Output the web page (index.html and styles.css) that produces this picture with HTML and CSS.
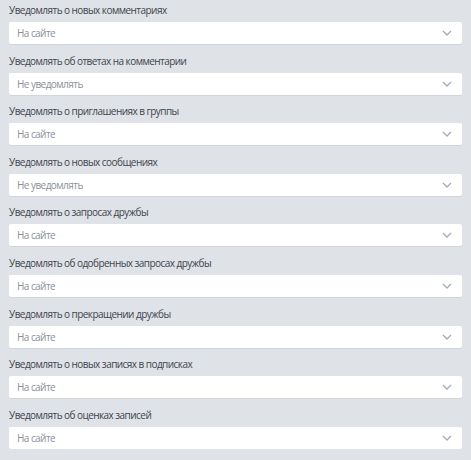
FILE: index.html
```html
<!DOCTYPE html>
<html lang="ru">
<head>
  <meta charset="UTF-8" />
  <meta name="viewport" content="width=device-width, initial-scale=1.0"/>
  <title>Уведомления</title>
  <link rel="stylesheet" href="styles.css">
</head>
<body>
  <div class="settings">
    <div class="field">
      <label>Уведомлять о новых комментариях</label>
      <div class="select"><span>На сайте</span><svg class="chev" width="10" height="6" viewBox="0 0 10 6"><path d="M1 1l4 4 4-4"/></svg></div>
    </div>
    <div class="field">
      <label>Уведомлять об ответах на комментарии</label>
      <div class="select"><span>Не уведомлять</span><svg class="chev" width="10" height="6" viewBox="0 0 10 6"><path d="M1 1l4 4 4-4"/></svg></div>
    </div>
    <div class="field">
      <label>Уведомлять о приглашениях в группы</label>
      <div class="select"><span>На сайте</span><svg class="chev" width="10" height="6" viewBox="0 0 10 6"><path d="M1 1l4 4 4-4"/></svg></div>
    </div>
    <div class="field">
      <label>Уведомлять о новых сообщениях</label>
      <div class="select"><span>Не уведомлять</span><svg class="chev" width="10" height="6" viewBox="0 0 10 6"><path d="M1 1l4 4 4-4"/></svg></div>
    </div>
    <div class="field">
      <label>Уведомлять о запросах дружбы</label>
      <div class="select"><span>На сайте</span><svg class="chev" width="10" height="6" viewBox="0 0 10 6"><path d="M1 1l4 4 4-4"/></svg></div>
    </div>
    <div class="field">
      <label>Уведомлять об одобренных запросах дружбы</label>
      <div class="select"><span>На сайте</span><svg class="chev" width="10" height="6" viewBox="0 0 10 6"><path d="M1 1l4 4 4-4"/></svg></div>
    </div>
    <div class="field">
      <label>Уведомлять о прекращении дружбы</label>
      <div class="select"><span>На сайте</span><svg class="chev" width="10" height="6" viewBox="0 0 10 6"><path d="M1 1l4 4 4-4"/></svg></div>
    </div>
    <div class="field">
      <label>Уведомлять о новых записях в подписках</label>
      <div class="select"><span>На сайте</span><svg class="chev" width="10" height="6" viewBox="0 0 10 6"><path d="M1 1l4 4 4-4"/></svg></div>
    </div>
    <div class="field">
      <label>Уведомлять об оценках записей</label>
      <div class="select"><span>На сайте</span><svg class="chev" width="10" height="6" viewBox="0 0 10 6"><path d="M1 1l4 4 4-4"/></svg></div>
    </div>
  </div>
</body>
</html>
```

FILE: styles.css
```css
body {
  margin: 0;
  background: #dfe2e7;
  font-family: "Open Sans", Arial, sans-serif;
  font-size: 10px;
  letter-spacing: -0.55px;
}
.settings {
  padding: 0 9px;
  display: flex;
  flex-direction: column;
  gap: 6.6px;
}
.field {
  display: flex;
  flex-direction: column;
  gap: 4px;
}
.field label {
  line-height: 16px;
  padding-top: 2px;
  color: #40454d;
}
.select {
  height: 22px;
  background: #fff;
  border-radius: 2px;
  box-shadow: 0 1px 0 #d2d5da;
  display: flex;
  align-items: center;
  justify-content: space-between;
  padding: 0 10px 0 8px;
  color: #8b9098;
}
.chev {
  fill: none;
  stroke: #a4abb6;
  stroke-width: 1.3;
}
```
